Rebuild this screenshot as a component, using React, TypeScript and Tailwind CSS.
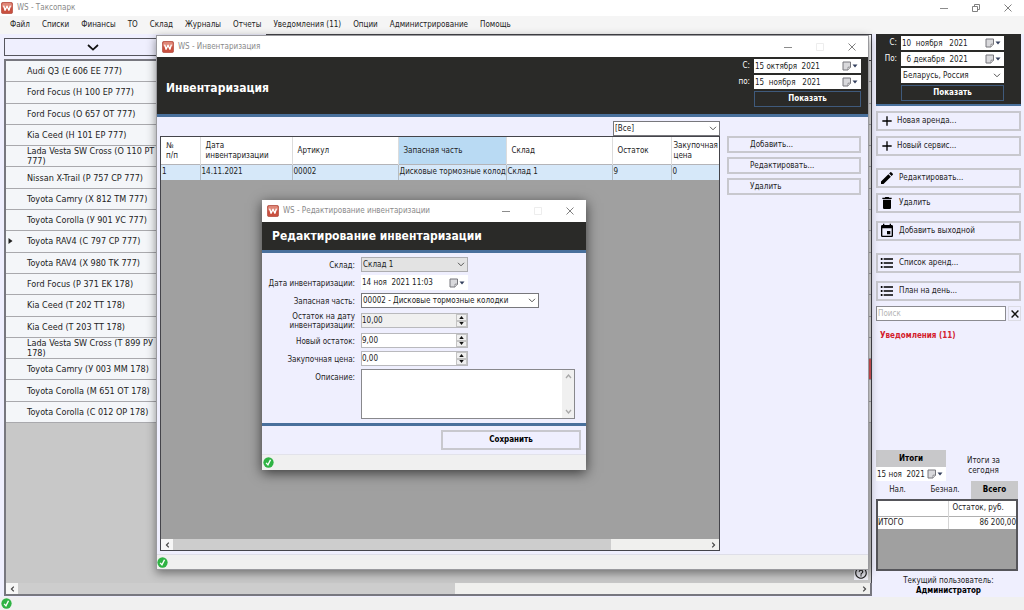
import React from 'react';
import { MdAdd, MdDelete, MdEdit, MdEvent, MdFormatListBulleted, MdHelpOutline } from 'react-icons/md';

const MENU = ['Файл', 'Списки', 'Финансы', 'ТО', 'Склад', 'Журналы', 'Отчеты', 'Уведомления (11)', 'Опции', 'Администрирование', 'Помощь'];

const CARS = [
  'Audi Q3 (E 606 EE 777)',
  'Ford Focus (H 100 EP 777)',
  'Ford Focus (O 657 OT 777)',
  'Kia Ceed (H 101 EP 777)',
  'Lada Vesta SW Cross (O 110 PT 777)',
  'Nissan X-Trail (P 757 CP 777)',
  'Toyota Camry (X 812 TM 777)',
  'Toyota Corolla (У 901 УС 777)',
  'Toyota RAV4 (C 797 CP 777)',
  'Toyota RAV4 (X 980 TK 777)',
  'Ford Focus (P 371 EK 178)',
  'Kia Ceed (T 202 TT 178)',
  'Kia Ceed (T 203 TT 178)',
  'Lada Vesta SW Cross (T 899 РУ 178)',
  'Toyota Camry (У 003 MM 178)',
  'Toyota Corolla (M 651 OT 178)',
  'Toyota Corolla (C 012 OP 178)',
];
const CURRENT_CAR = 8;
const BOOKED_CAR = 14;

function Logo() {
  return (
    <svg viewBox="0 0 12 12" className="h-3 w-3 shrink-0" aria-hidden="true">
      <rect x="0.3" y="0.3" width="11.4" height="11.4" rx="2" fill="#c9503f" stroke="#a8473b" strokeWidth="0.6" />
      <rect x="1" y="1" width="10" height="4.5" rx="1.5" fill="#df8778" />
      <path d="M2.6 3.6l1.5 4.6L6 4.2l1.9 4L9.4 3.6" fill="none" stroke="#fff" strokeWidth="1.4" strokeLinejoin="round" />
    </svg>
  );
}

function TitleBar({ title, restore, className }: { title: string; restore?: boolean; className: string }) {
  return (
    <div className={'flex shrink-0 items-center bg-white ' + className}>
      <Logo />
      <span className="ml-[4px] flex-1 whitespace-nowrap text-[8px] text-[#8a8a8a]">{title}</span>
      <button aria-label="Свернуть" className="flex w-8 justify-center">
        <svg viewBox="0 0 8 8" className="h-2 w-2" stroke="#8c8c8c" strokeWidth="1"><path d="M0 4.5h8" /></svg>
      </button>
      <button aria-label="Развернуть" className="flex w-8 justify-center">
        {restore ? (
          <svg viewBox="0 0 8 8" className="h-2 w-2" fill="none" stroke="#808080" strokeWidth="1"><path d="M.5 2.5h5v5h-5zM2.5 2.5v-2h5v5h-2" /></svg>
        ) : (
          <svg viewBox="0 0 8 8" className="h-2 w-2" fill="none" stroke="#ededed" strokeWidth="1"><path d="M.5.5h7v7h-7z" /></svg>
        )}
      </button>
      <button aria-label="Закрыть" className="flex w-8 justify-center">
        <svg viewBox="0 0 8 8" className="h-2 w-2" stroke="#808080" strokeWidth="1"><path d="M.5.5l7 7M7.5.5l-7 7" /></svg>
      </button>
    </div>
  );
}

function StatusBar({ className }: { className: string }) {
  return (
    <div className={'flex shrink-0 items-center bg-[#f0f0f0] ' + className}>
      <svg viewBox="0 0 12 12" className="h-[11px] w-[11px]" role="img" aria-label="Готово">
        <circle cx="6" cy="6" r="5.6" fill="#2fb344" />
        <path d="M3.4 6.4l2 2.2L8.2 3" fill="none" stroke="#fff" strokeWidth="1.5" />
      </svg>
    </div>
  );
}

function DateField({ id, value, label, className }: { id: string; value: string; label?: string; className: string }) {
  return (
    <div className={'flex items-center bg-white ' + className}>
      <input id={id} aria-label={label} defaultValue={value} className="h-full w-0 flex-1 bg-transparent pl-px text-[8px] whitespace-pre text-[#222] outline-none" />
      <button aria-label="Открыть календарь" className="mr-[3px] shrink-0">
        <svg viewBox="0 0 16 10" className="h-[10px] w-4">
          <path d="M1 1h7.5v5.5L6 9H1z" fill="#d9d9dc" stroke="#77777c" strokeWidth="1" />
          <path d="M8.5 6.2H6V9" fill="#fff" stroke="#77777c" strokeWidth="0.8" />
          <path d="M10.5 3.5h5l-2.5 3z" fill="#34405e" />
        </svg>
      </button>
    </div>
  );
}

function SelectField({ id, value, label, className }: { id: string; value: string; label?: string; className: string }) {
  return (
    <div className={'grid border ' + className}>
      <select id={id} aria-label={label} defaultValue={value} className="col-start-1 row-start-1 h-full w-full appearance-none bg-transparent pl-px text-[8px] text-[#222] outline-none">
        <option>{value}</option>
      </select>
      <svg viewBox="0 0 8 5" className="pointer-events-none col-start-1 row-start-1 mr-[2px] h-[5px] w-[8px] self-center justify-self-end" fill="none" stroke="#555" strokeWidth="1"><path d="M1 .8l3 3 3-3" /></svg>
    </div>
  );
}

function SpinField({ id, value, className }: { id: string; value: string; className: string }) {
  return (
    <div className={'flex h-[15px] w-[107px] border border-[#b9b9bd] ' + className}>
      <input id={id} defaultValue={value} className="w-0 flex-1 bg-transparent text-[8px] text-[#222] outline-none" />
      <div className="flex w-[11px] flex-col bg-[#f0f0f0]">
        <button aria-label="Больше" className="flex flex-1 items-center justify-center border border-[#c4c4c4]">
          <svg viewBox="0 0 6 4" className="h-[3px] w-[5px]"><path d="M3 0l3 4H0z" fill="#111" /></svg>
        </button>
        <button aria-label="Меньше" className="flex flex-1 items-center justify-center border border-[#c4c4c4]">
          <svg viewBox="0 0 6 4" className="h-[3px] w-[5px]"><path d="M0 0h6L3 4z" fill="#111" /></svg>
        </button>
      </div>
    </div>
  );
}

function ScrollBar({ thumb, className }: { thumb: string; className: string }) {
  return (
    <div className={'flex h-[11px] shrink-0 bg-[#f0f0ee] ' + className}>
      <button aria-label="Влево" className="flex w-3 items-center justify-center bg-[#f6f6f6]">
        <svg viewBox="0 0 5 7" className="h-[6px] w-[5px]" fill="none" stroke="#444" strokeWidth="1.4"><path d="M4 .8L1.3 3.5 4 6.2" /></svg>
      </button>
      <div className="flex-1"><div className={'h-full ' + thumb} /></div>
      <button aria-label="Вправо" className="flex w-3 items-center justify-center">
        <svg viewBox="0 0 5 7" className="h-[6px] w-[5px]" fill="none" stroke="#444" strokeWidth="1.4"><path d="M1 .8l2.7 2.7L1 6.2" /></svg>
      </button>
    </div>
  );
}

function ShowButton({ className }: { className: string }) {
  return <button className={'border border-[#3f5a7c] text-[8px] font-bold text-white ' + className}>Показать</button>;
}

function SideButton({ icon, small, children }: { icon: React.ReactNode; small?: boolean; children: React.ReactNode }) {
  return (
    <button className="flex h-5 w-full items-center border-2 border-[#c8c8ce] pl-[1px] text-left text-[8px] text-[#222]">
      <span className="flex w-4 justify-center text-[16px] text-black">{icon}</span>
      <span className={small ? 'ml-[2px]' : 'ml-[4px]'}>{children}</span>
    </button>
  );
}

function Sidebar() {
  return (
    <aside className="flex w-[145px] shrink-0 flex-col">
      <div className="flex h-[72px] flex-col gap-[2px] border-b-2 border-[#49709c] bg-[#2a2a28] pt-[2px] pr-[17px] text-[8px] text-white">
        <div className="flex items-center gap-[4px]">
          <label htmlFor="from" className="w-[21px] text-right">С:</label>
          <DateField id="from" value="10  ноября   2021" className="h-[14px] flex-1" />
        </div>
        <div className="flex items-center gap-[4px]">
          <label htmlFor="to" className="w-[21px] text-right">По:</label>
          <DateField id="to" value="  6 декабря  2021" className="h-[14px] flex-1" />
        </div>
        <SelectField id="country" label="Страна" value="Беларусь, Россия" className="ml-[25px] h-[15px] border-white bg-white" />
        <ShowButton className="ml-[25px] h-4" />
      </div>
      <div className="mt-[5px] flex flex-col gap-[5px]">
        <SideButton small icon={<MdAdd />}>Новая аренда...</SideButton>
        <SideButton small icon={<MdAdd />}>Новый сервис...</SideButton>
      </div>
      <div className="mt-3 flex flex-col gap-[5px]">
        <SideButton icon={<MdEdit />}>Редактировать...</SideButton>
        <SideButton icon={<MdDelete />}>Удалить</SideButton>
      </div>
      <div className="mt-2">
        <SideButton icon={<MdEvent />}>Добавить выходной</SideButton>
      </div>
      <div className="mt-3 flex flex-col gap-2">
        <SideButton icon={<MdFormatListBulleted />}>Список аренд...</SideButton>
        <SideButton icon={<MdFormatListBulleted />}>План на день...</SideButton>
      </div>
      <div className="mt-[5px] flex h-[15px] gap-[2px]">
        <input aria-label="Поиск" placeholder="Поиск" className="w-0 flex-1 border border-[#8b8b90] bg-white pl-[1px] text-[8px] outline-none placeholder:text-[#b5b5b5]" />
        <button aria-label="Очистить" className="flex w-[13px] items-center justify-center border border-[#dcdce4]">
          <svg viewBox="0 0 8 8" className="h-2 w-2" stroke="#111" strokeWidth="1.4"><path d="M.6.6l6.8 6.8M7.4.6L.6 7.4" /></svg>
        </button>
      </div>
      <a href="#notifications" className="mt-[9px] ml-[4px] text-[8px] leading-3 font-bold text-[#d3202c]">Уведомления (11)</a>

      <section className="mt-auto flex flex-col text-[8px] text-[#222]">
        <div className="flex">
          <div className="w-[70px]">
            <button className="h-[17px] w-full bg-[#c8c8ca] font-bold text-black">Итоги</button>
            <DateField id="total-date" label="Дата итогов" value="15 ноя  2021" className="h-[14px] w-full" />
          </div>
          <button className="flex-1 leading-[10px]">Итоги за<br />сегодня</button>
        </div>
        <div className="mr-[3px] flex h-[18px]">
          <button className="w-[43px]">Нал.</button>
          <button className="flex-1">Безнал.</button>
          <button className="w-[47px] bg-[#c8c8ca] font-bold text-black">Всего</button>
        </div>
        <div className="mr-[3px] h-[72px] border-2 border-[#55555a] bg-[#a0a0a0]">
          <table className="w-full table-fixed border-collapse bg-white">
            <thead>
              <tr className="h-[15px] border-b border-[#b0b0b0]">
                <th className="w-[70px] border-r border-[#d5d5d5] p-0" />
                <th className="p-0 pl-[4px] text-left font-normal">Остаток, руб.</th>
              </tr>
            </thead>
            <tbody>
              <tr className="h-[13px]">
                <td className="border-r border-[#d5d5d5] p-0">ИТОГО</td>
                <td className="p-0 text-right">86 200,00</td>
              </tr>
            </tbody>
          </table>
        </div>
        <p className="mt-[5px] mb-px text-center leading-[10px]">Текущий пользователь:<br /><b className="text-black">Администратор</b></p>
      </section>
    </aside>
  );
}

function InventoryWindow() {
  const head = 'border-r border-[#dcdcdc] p-0 pt-px pl-[5px] text-left font-normal';
  const cell = 'overflow-hidden border-r border-[#b4bcc4] p-0 pl-[1px] whitespace-nowrap';
  return (
    <section className="absolute top-[35px] right-[155px] bottom-10 left-[156px] flex flex-col border border-[#9a9a9e] bg-[#efeffe] shadow-[0_3px_9px_rgba(0,0,0,0.45)]">
      <TitleBar title="WS - Инвентаризация" className="h-[21px] pl-[5px]" />
      <header className="flex h-[60px] shrink-0 items-start border-b-[3px] border-[#49709c] bg-[#2a2a28] pr-[7px] text-[8px] text-white">
        <h1 className="flex-1 self-center pt-[4px] pl-[9px] text-[12px] font-bold">Инвентаризация</h1>
        <div className="grid grid-cols-[auto_107px] items-center gap-x-[4px] gap-y-[2px] pt-[2px]">
          <label htmlFor="inv-from" className="text-right">С:</label>
          <DateField id="inv-from" value="15 октября  2021" className="h-[14px]" />
          <label htmlFor="inv-to" className="text-right">по:</label>
          <DateField id="inv-to" value="15  ноября   2021" className="h-[14px]" />
          <ShowButton className="col-start-2 h-4" />
        </div>
      </header>
      <div className="flex flex-1 gap-[7px] pt-[4px] pr-[7px] pl-[3px]">
        <div className="flex flex-1 flex-col">
          <SelectField id="filter" label="Фильтр" value="[Все]" className="h-[15px] w-[107px] self-end border-[#77777c] bg-white" />
          <div className="flex flex-1 flex-col border border-[#44444a] bg-[#a0a0a0]">
            <div className="flex-1 overflow-hidden">
              <table className="w-full table-fixed border-collapse text-[8px] leading-[10px] text-[#222]">
                <colgroup>
                  <col className="w-[39px]" /><col className="w-[92px]" /><col className="w-[106px]" /><col className="w-[108px]" /><col className="w-[106px]" /><col className="w-[59px]" /><col />
                </colgroup>
                <thead>
                  <tr className="h-[27px] border-b border-[#b4b4b8] bg-white">
                    <th className={head}>№<br />п/п</th>
                    <th className={head}>Дата<br />инвентаризации</th>
                    <th className={head}>Артикул</th>
                    <th className={head + ' bg-[#b9daf3]'}>Запасная часть</th>
                    <th className={head}>Склад</th>
                    <th className={head}>Остаток</th>
                    <th className="overflow-hidden p-0 pt-px pl-[2px] text-left font-normal">Закупочная цена</th>
                  </tr>
                </thead>
                <tbody>
                  <tr className="h-4 bg-[#d6e8f9]">
                    <td className={cell}>1</td>
                    <td className={cell}>14.11.2021</td>
                    <td className={cell}>00002</td>
                    <td className={cell}>Дисковые тормозные колодки</td>
                    <td className={cell}>Склад 1</td>
                    <td className={cell}>9</td>
                    <td className="p-0 pl-[1px]">0</td>
                  </tr>
                </tbody>
              </table>
            </div>
            <ScrollBar thumb="w-[82%] bg-[#cdcdcd]" className="" />
          </div>
        </div>
        <div className="flex w-[134px] flex-col gap-[4px] pt-[15px]">
          {['Добавить...', 'Редактировать...', 'Удалить'].map((t) => (
            <button key={t} className="h-[17px] border-2 border-[#c8c8ce] pl-[21px] text-left text-[8px] text-[#222]">{t}</button>
          ))}
        </div>
      </div>
      <StatusBar className="mt-[3px] h-[15px] border-t border-[#dedee8]" />
    </section>
  );
}

function EditDialog() {
  const label = 'self-center pt-px text-right leading-[9px]';
  return (
    <section role="dialog" aria-label="Редактирование инвентаризации" className="absolute top-[200px] left-[262px] flex w-[324px] flex-col bg-[#efeffe] shadow-[0_3px_12px_rgba(0,0,0,0.65)]">
      <TitleBar title="WS - Редактирование инвентаризации" className="h-[22px] pl-[5px]" />
      <h2 className="flex h-[31px] items-center border-b-[3px] border-[#49709c] bg-[#2a2a28] pl-[10px] text-[12px] font-bold text-white">Редактирование инвентаризации</h2>
      <form className="grid grid-cols-[93px_1fr] gap-x-[6px] gap-y-[3px] border-b-[3px] border-[#49709c] pt-[4px] pr-[11px] pb-[4px] text-[8px] text-[#222]">
        <label htmlFor="store" className={label}>Склад:</label>
        <SelectField id="store" value="Склад 1" className="h-[15px] w-[107px] border-[#adadb0] bg-[#e3e3e3]" />
        <label htmlFor="date" className={label}>Дата инвентаризации:</label>
        <DateField id="date" value="14 ноя  2021 11:03" className="h-[15px] w-[107px]" />
        <label htmlFor="part" className={label}>Запасная часть:</label>
        <SelectField id="part" value="00002 - Дисковые тормозные колодки" className="h-[15px] w-[178px] border-[#77777c] bg-white" />
        <label htmlFor="balance" className={label}>Остаток на дату инвентаризации:</label>
        <SpinField id="balance" value="10,00" className="self-center bg-[#f0f0f0]" />
        <label htmlFor="new-balance" className={label}>Новый остаток:</label>
        <SpinField id="new-balance" value="9,00" className="bg-white" />
        <label htmlFor="price" className={label}>Закупочная цена:</label>
        <SpinField id="price" value="0,00" className="bg-white" />
        <label htmlFor="note" className="pt-[4px] text-right leading-[9px]">Описание:</label>
        <div className="flex h-[50px] border border-[#88888c] bg-white">
          <textarea id="note" className="flex-1 resize-none outline-none" />
          <div className="flex w-3 flex-col items-center justify-between bg-[#f0f0f0] py-[4px]">
            <svg viewBox="0 0 7 5" className="h-[5px] w-[7px]" fill="none" stroke="#a8a8a8" strokeWidth="1.3"><path d="M1 4l2.5-3L6 4" /></svg>
            <svg viewBox="0 0 7 5" className="h-[5px] w-[7px]" fill="none" stroke="#a8a8a8" strokeWidth="1.3"><path d="M1 1l2.5 3L6 1" /></svg>
          </div>
        </div>
      </form>
      <div className="flex justify-end px-[5px] py-[4px]">
        <button className="h-5 w-[140px] border-2 border-[#c8c8ce] text-[8px] font-bold text-black">Сохранить</button>
      </div>
      <StatusBar className="h-4 border-t border-[#e2e2ea] pl-px" />
    </section>
  );
}

export default function App() {
  return (
    <div className="relative flex h-screen min-h-[600px] flex-col overflow-hidden bg-[#efeffe] font-['DejaVu_Sans_Condensed','Noto_Sans',sans-serif] text-[#222]">
      <TitleBar title="WS - Таксопарк" restore className="h-4 pl-px" />
      <nav className="flex h-[18px] shrink-0 items-center gap-3 bg-[#f5f5f5] pl-[10px] text-[8px]">
        {MENU.map((m) => (
          <button key={m} className="whitespace-nowrap">{m}</button>
        ))}
      </nav>
      <div className="flex min-h-0 flex-1 gap-[4px] pr-[3px] pl-[4px]">
        <main className="flex flex-1 flex-col pb-px">
          <div className="flex min-h-0 flex-1">
            <div className="flex w-[262px] flex-col pt-[4px]">
              <button aria-label="Показать фильтр" className="flex h-[18px] shrink-0 items-center border border-[#55555e] pl-[82px]">
                <svg viewBox="0 0 12 7" className="h-[7px] w-3" fill="none" stroke="#111" strokeWidth="1.7"><path d="M1 1l5 4.6L11 1" /></svg>
              </button>
              <div className="mt-[3px] flex-1 border-t-2 border-l-2 border-[#77777f] bg-[#c8c8c8]">
                <ul className="grid h-[362px] auto-rows-fr bg-[#f4f6f9] text-[9px] leading-[10px]">
                  {CARS.map((car, i) => (
                    <li key={car} className="flex min-h-0 items-center border-b border-[#a9a9ad]">
                      <span className="flex w-[21px] shrink-0 pl-[2px]">
                        {i === CURRENT_CAR && <svg viewBox="0 0 5 6" className="h-[6px] w-[5px]"><path d="M.5 0L4.5 3l-4 3z" fill="#222" /></svg>}
                      </span>
                      <span className="w-[129px]">{car}</span>
                    </li>
                  ))}
                </ul>
              </div>
            </div>
            <div className="relative flex flex-1 flex-col border-t border-r border-[#44444a] bg-[#c8c8c8]">
              <div className="h-[26px] shrink-0 border-b border-[#44444a] bg-white" />
              <div className="grid h-[362px] auto-rows-fr bg-[#e6e6e6]">
                {CARS.map((car, i) => (
                  <div key={car} className={i === BOOKED_CAR ? 'border-b border-[#a9a9ad] bg-[#e0585c]' : 'border-b border-[#a9a9ad]'} />
                ))}
              </div>
              <button aria-label="Справка" className="absolute right-[3px] bottom-[3px] flex h-[14px] w-[14px] items-center justify-center bg-[#f0f0f8] text-[14px]"><MdHelpOutline /></button>
            </div>
          </div>
          <ScrollBar thumb="w-[52%] bg-[#cdcdcd]" className="box-content border-x-2 border-b-2 border-[#77777f]" />
        </main>
        <Sidebar />
      </div>
      <StatusBar className="h-[13px] pl-px" />
      <InventoryWindow />
      <EditDialog />
    </div>
  );
}
